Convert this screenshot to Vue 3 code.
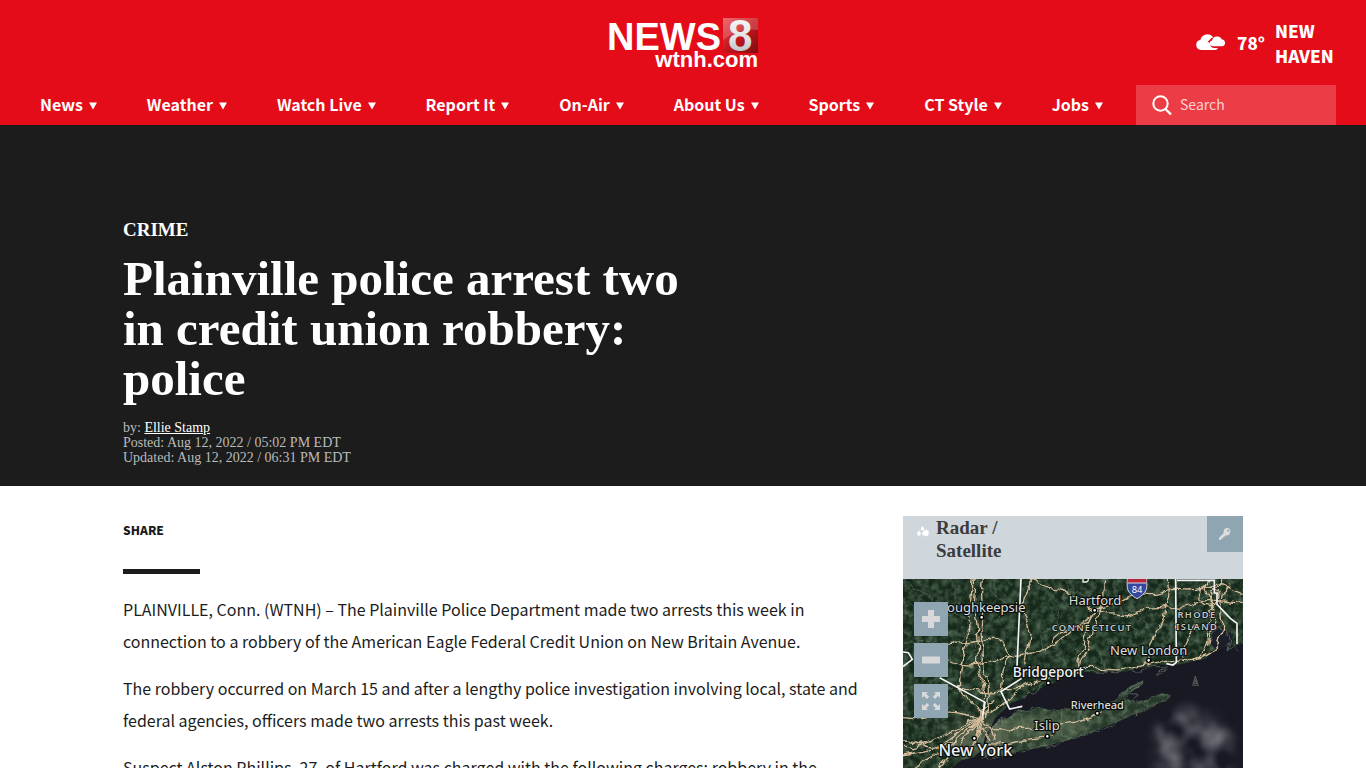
<template>
  <div class="page">
    <header class="site-header">
      <div class="header-top">
        <a href="#" class="logo" aria-label="News 8 wtnh.com">
          <svg width="152" height="56" viewBox="0 0 152 56">
            <defs>
              <linearGradient id="logoBox" x1="0" y1="0" x2="1" y2="1">
                <stop offset="0" stop-color="#e8484c" />
                <stop offset="0.5" stop-color="#c4161c" />
                <stop offset="1" stop-color="#7c0d12" />
              </linearGradient>
              <linearGradient id="logoEight" x1="0" y1="0" x2="0" y2="1">
                <stop offset="0" stop-color="#ffffff" />
                <stop offset="0.6" stop-color="#dcdfe1" />
                <stop offset="1" stop-color="#aab0b4" />
              </linearGradient>
            </defs>
            <rect x="116" y="3" width="35" height="35" fill="url(#logoBox)" />
            <path d="M116 3h35v12c-12-2-24 2-35 10z" fill="#fff" opacity="0.18" />
            <text x="0" y="35" class="logo-news">NEWS</text>
            <text x="121" y="36" class="logo-eight" fill="url(#logoEight)">8</text>
            <text x="151" y="52" text-anchor="end" class="logo-site">wtnh.com</text>
          </svg>
        </a>
        <a href="#" class="weather">
          <svg width="32" height="18" viewBox="0 0 32 18" fill="#fff">
            <path d="M6 16a5 5 0 0 1-.7-9.900A7.400 7.400 0 0 1 18.300 3.200a6 6 0 0 0-4.200 3.300 4.600 4.600 0 0 0-1.700 1.500 7 7 0 0 1 2.800 1c-.5 3 1.500 4.800 4 5H23A4 4 0 0 1 20 16z" />
            <path d="M17.300 12.300a3 3 0 0 1-.3-5.900A5.400 5.400 0 0 1 27 5.600a3.400 3.400 0 0 1 .4 6.700z" />
          </svg>
          <span class="temp">78°</span>
          <span class="city">NEW HAVEN</span>
        </a>
      </div>
      <div class="header-nav">
        <nav class="nav-list">
          <a v-for="item in navItems" :key="item" href="#" class="nav-item">
            {{ item }}
            <svg width="8" height="8" viewBox="0 0 8 8"><path d="M0 0.500h8L4 7.500z" fill="#fff" /></svg>
          </a>
        </nav>
        <form class="search" @submit.prevent>
          <label for="search-input" aria-label="Search">
            <svg width="20" height="21" viewBox="0 0 20 21" fill="none" stroke="#fff" stroke-width="2">
              <circle cx="8.500" cy="8.500" r="7.200" />
              <path d="M13.500 14l5.500 5.500" stroke-width="2.400" />
            </svg>
          </label>
          <input id="search-input" v-model="query" type="text" placeholder="Search" />
        </form>
      </div>
    </header>

    <section class="hero">
      <div class="container">
        <a href="#" class="category">CRIME</a>
        <h1 class="headline">Plainville police arrest two in credit union robbery: police</h1>
        <div class="meta">
          <p>by: <a href="#">Ellie Stamp</a></p>
          <p>Posted: Aug 12, 2022 / 05:02 PM EDT</p>
          <p>Updated: Aug 12, 2022 / 06:31 PM EDT</p>
        </div>
      </div>
    </section>

    <main class="container content">
      <article class="article">
        <h2 class="share">SHARE</h2>
        <div class="divider"></div>
        <p v-for="(text, i) in paragraphs" :key="i">{{ text }}</p>
      </article>

      <aside class="radar">
        <div class="radar-header">
          <svg class="radar-icon" width="13" height="11" viewBox="0 0 13 11" fill="#fff">
            <path d="M2 4.500c1 1.400 1.800 2.300 1.800 3.400a1.800 1.800 0 0 1-3.600 0C.2 6.800 1 5.900 2 4.500z" />
            <path d="M5.500 0c.9 1.300 1.600 2 1.600 3a1.600 1.600 0 0 1-3.200 0c0-1 .7-1.700 1.600-3z" />
            <path d="M9 2.500l.8 2 2-.6-.7 2 1.700 1.100-1.800 1 .3 2.200-1.900-.8L8 10.800 7 9.300l-2.100.3.900-1.800L4.600 6.500l1.900-.4.400-2 1.400.8z" />
          </svg>
          <h3>Radar / Satellite</h3>
          <button class="key-button" aria-label="Legend">
            <svg width="14" height="14" viewBox="0 0 14 14">
              <path d="M9.400 0.800a3.900 3.900 0 0 0-3.700 5.100L1 10.800v2.300h1.900l.5-1.400 1.400-.3.300-1.400 1.300-.3 1-1.300A3.900 3.900 0 1 0 9.400.8z" fill="#dcdcdc" />
              <circle cx="10.300" cy="3.700" r="1.100" fill="#8fa5b1" />
            </svg>
          </button>
        </div>
        <div class="map">
          <svg class="map-canvas" viewBox="24 207 1020 630" preserveAspectRatio="xMidYMin slice">
            <defs>
              <filter id="terrain" x="0" y="0" width="1" height="1">
                <feTurbulence type="fractalNoise" baseFrequency="0.05" numOctaves="4" seed="4" />
                <feColorMatrix values="0 0 0 0 0.22  0 0 0 0 0.34  0 0 0 0 0.22  1 0 0 0 -0.34" />
              </filter>
              <filter id="cloud" x="0" y="0" width="1" height="1">
                <feTurbulence type="fractalNoise" baseFrequency="0.014" numOctaves="2" seed="9" />
                <feColorMatrix values="0 0 0 0 0.44  0 0 0 0 0.44  0 0 0 0 0.48  1 0 0 0 -0.3" />
              </filter>
              <filter id="wobble" filterUnits="userSpaceOnUse" x="24" y="207" width="1020" height="630">
                <feTurbulence type="fractalNoise" baseFrequency="0.03" numOctaves="3" seed="2" />
                <feDisplacementMap in="SourceGraphic" scale="24" xChannelSelector="R" yChannelSelector="G" />
              </filter>
              <filter id="soft" x="-0.3" y="-0.3" width="1.6" height="1.6"><feGaussianBlur stdDeviation="18" /></filter>
              <clipPath id="landClip"><path :d="mainland" /><path :d="island" /></clipPath>
              <mask id="cloudMask">
                <path d="M780 837V640l70-50 100 20 60 70v157z" fill="#fff" filter="url(#soft)" />
              </mask>
            </defs>
            <rect x="24" y="207" width="1020" height="630" fill="#181923" />
            <path :d="mainland" fill="#15281a" />
            <path :d="island" fill="#27392a" />
            <g clip-path="url(#landClip)">
              <rect x="24" y="207" width="1020" height="630" filter="url(#terrain)" />
              <ellipse cx="250" cy="690" rx="90" ry="60" fill="#7b8369" opacity="0.5" filter="url(#soft)" />
              <ellipse cx="430" cy="650" rx="150" ry="30" fill="#738264" opacity="0.5" filter="url(#soft)" />
              <path d="M945 400l8-40 15-18 8 20 12-14 4 30 14-14 6 36-14 34-16-22-10 18z" fill="#1c1e29" />
            </g>
            <g filter="url(#wobble)">
              <path :d="island" fill="none" stroke="#758271" stroke-width="2" stroke-dasharray="9 3 4 2" />
              <path d="M300 640l18-12 10 12 14-20 18 12M385 565l15-18 16 5 20-22 24-8M570 482l38 8 25-6 30 5 40-10 35 5 24-16 50 3M945 390l18-45 16 25 10-15 15 35-8 30 20-15 14 14M680 557l20-22 28-12 15-10-8 14-30 20 22 14-8 8M780 488l25-12 5 5-27 12z" fill="none" stroke="#718071" stroke-width="2" />
              <g class="boundaries">
                <path v-for="(d, i) in boundaries" :key="i" :d="d" />
              </g>
            </g>
            <path d="M893 526l8-28 9 28zM898 521l4-12 3 12z" fill="none" stroke="#718071" stroke-width="2" />
            <rect x="740" y="540" width="304" height="297" filter="url(#cloud)" mask="url(#cloudMask)" />
            <g class="roads" filter="url(#wobble)">
              <path v-for="(d, i) in roads" :key="i" :d="d" />
            </g>
            <g class="borders">
              <path v-for="(d, i) in borders" :key="i" :d="d" />
            </g>
            <path d="M697 207h58c-1 10 2 17 0 26-2 14-14 24-29 33-15-9-27-19-29-33-2-9 1-16 0-26z" fill="#3547a0" stroke="#dcdce4" stroke-width="3" />
            <path d="M698 207h56v12h-56z" fill="#b82635" />
            <path d="M698 219h56" stroke="#dcdce4" stroke-width="3" />
            <path d="M564 207v9h10q7-2 6-9" fill="none" stroke="#eee" stroke-width="4" />
            <text x="726" y="249" text-anchor="middle" class="route">84</text>
            <g v-for="place in places" :key="place.name">
              <circle v-if="place.dot" :cx="place.dot[0]" :cy="place.dot[1]" r="6" fill="#fff" stroke="#000" stroke-width="4" />
              <text :x="place.x" :y="place.y" text-anchor="middle" :class="['place', place.kind]">{{ place.name }}</text>
            </g>
          </svg>
          <div class="map-controls">
            <button aria-label="Zoom in">
              <svg width="18" height="18" viewBox="0 0 18 18" fill="#d6d8d9"><path d="M6 0h6v6h6v6h-6v6H6v-6H0V6h6z" /></svg>
            </button>
            <button aria-label="Zoom out">
              <svg width="18" height="18" viewBox="0 0 18 18" fill="#d6d8d9"><path d="M0 5.500h18v7H0z" /></svg>
            </button>
            <button aria-label="Full screen">
              <svg width="18" height="18" viewBox="0 0 18 18" fill="#d6d8d9">
                <path d="M0 0h6L4.200 1.800l3 3L5 7 2 4 0 6zM18 0v6l-2-2-3 3-2.200-2.200 3-3L12 0zM0 18v-6l2 2 3-3 2.200 2.200-3 3L6 18zM18 18h-6l1.800-1.800-3-3L13 11l3 3 2-2z" />
              </svg>
            </button>
          </div>
        </div>
      </aside>
    </main>
  </div>
</template>

<script setup>
import { ref } from 'vue';

const query = ref('');

const navItems = ['News', 'Weather', 'Watch Live', 'Report It', 'On-Air', 'About Us', 'Sports', 'CT Style', 'Jobs'];

const paragraphs = [
  'PLAINVILLE, Conn. (WTNH) – The Plainville Police Department made two arrests this week in connection to a robbery of the American Eagle Federal Credit Union on New Britain Avenue.',
  'The robbery occurred on March 15 and after a lengthy police investigation involving local, state and federal agencies, officers made two arrests this past week.',
  'Suspect Alston Phillips, 27, of Hartford was charged with the following charges: robbery in the'
];

// Land outlines
const mainland = 'M24 207H1044V400L1020 408 1000 402 975 418 945 425 935 445 900 452 860 462 825 466 790 462 755 472 720 476 690 486 650 484 600 490 570 482 540 494 505 500 480 518 455 524 430 540 405 548 385 565 350 580 325 600 300 625 288 650 270 680 262 720 235 742 200 750 170 774 150 837H24z';
const island = 'M275 690L292 650 310 632 345 622 370 598 400 604 430 590 470 602 520 596 570 602 625 580 660 572 680 548 715 525 742 512 735 528 705 548 690 565 720 578 760 568 800 550 828 555 822 566 760 594 700 622 640 648 570 674 500 696 430 714 360 726 300 742 255 738z';

const roads = [
  'M240 207c6 40-8 70 2 110s4 60 8 90-12 60 4 90 16 50 14 80-18 40-22 80-10 30-8 50',
  'M262 207c-8 60 6 90-2 130s10 90 4 120 18 50 16 80 4 40-6 90',
  'M235 207c-10 70-13 100-18 160s-14 80-20 120-8 60 20 80 30 20 60 50',
  'M24 620c60 8 90-4 130-10s60 15 110 12M24 712c50 8 70-20 110-30s70-50 120-56',
  'M24 735c40-10 90-10 130-40s50-50 105-70M130 774c30-40 60-60 80-90s30-40 50-60',
  'M60 774c50-30 90-50 130-90s40-40 70-60M24 690c60 0 60 30 110 20s90-60 130-90',
  'M160 400c50-2 90 0 130-18 40-8 35 60 70 57s70-18 100-28 60-40 70-52 50-30 65-52',
  'M190 540c30-8 60 10 110 5s60-20 90-10M160 450c40 20 70 15 110 10s50-20 80-22',
  'M270 620c30-20 60-40 90-70s50-30 80-38 60-30 110-38 90 10 130 5 70-15 110-22 80-5 120-15 60-30 70-70-8-70 0-110 25-20 30-42',
  'M240 660c60-10 100 0 150-2s100-18 140-20 60-18 90-30M270 700c80 10 130-20 200-20',
  'M282 690c-10-20-20-40-22-60s-10 60-30 80M210 740c20-30 50-60 52-110s20-30 35-60M240 620c30 20 50 20 60 70',
  'M420 207c-20 20-40 60-35 90s20 50 20 80-20 60-18 90M345 440c-30 30-20 60-26 110',
  'M420 207c40 40 70 20 95 40s50 30 85 53c30 20 50 6 80 15s40-12 80-20 90 10 130-10 80-15 154-5',
  'M630 207c-10 40 10 60-28 95s-20 80-40 115-10 50-18 65M615 290c0 30-20 60-22 80s-20 60-30 75-14 25-14 40',
  'M600 300c20-10 40-10 70-22s50-30 90-25 60-20 90-15 70 0 110-14 50 30 80 25',
  'M820 207c10 60-10 70-10 105s-40 60-45 90 4 30-4 52M860 440c10-40 30-50 35-100M940 207c-30 40 20 60 10 90s-10 40-14 90-30 60-80 65',
  'M985 207c-20 30-50 40-42 70s20 15 20 40-25 50-25 90M920 240c20-20 40-10 50 10s-20 50-45 30-10-30-5-40',
  'M470 400c0-25 20-30 40-35s40-25 70-30'
];

const boundaries = [
  'M24 217l90 50v60h40M24 400h45v-8h60M24 560l70-30 24 20 60-20M180 240v70l50 30-30 50M300 207v50l30 20-15 60M510 207l10 40-30 45v50l-50 30 8 50M520 247l70 10M660 207v40l20 60 40-8 40 60M700 320l30 60M600 420l25 20 5 40 30 5M780 340l60 5M870 260h80M640 380v30l60 10M900 300v60M215 460l30-60-40-20M430 480v40l30 10M510 500v-50l-40-30M380 620v50l20 45M500 610v60l30 20M560 600l-8 50 20 20'
];

const borders = [
  'M378 207L366 468M380 505l-62 40 26 52 38-8M24 470l28-22-12-20-16-2',
  'M134 503l136 74-8 45M842 207l2 250-10 8-20-4M846 211h112v38h8v34l40 42 20 15v62'
];

const places = [
  { name: 'Poughkeepsie', x: 262, y: 305, dot: [260, 322] },
  { name: 'Hartford', x: 600, y: 285, dot: [599, 301] },
  { name: 'CONNECTICUT', x: 591, y: 364, kind: 'state' },
  { name: 'RHODE', x: 906, y: 325, kind: 'state' },
  { name: 'ISLAND', x: 906, y: 361, kind: 'state' },
  { name: 'New London', x: 761, y: 434, dot: [761, 451] },
  { name: 'Bridgeport', x: 460, y: 501, dot: [460, 519], kind: 'medium' },
  { name: 'Riverhead', x: 607, y: 598, dot: [607, 610], kind: 'small' },
  { name: 'Islip', x: 456, y: 661, dot: [457, 679] },
  { name: 'New York', x: 241, y: 738, dot: [238, 685], kind: 'large' }
];
</script>

<style>
body {
  margin: 0;
  background: #fff;
}
</style>

<style scoped>
.page {
  height: 100vh;
  overflow: hidden;
  font-family: "Noto Sans CJK SC", "Open Sans", sans-serif;
  color: #1c1c1c;
}

.site-header {
  background: #e50c19;
}

.header-top {
  display: grid;
  grid-template-columns: 1fr auto 1fr;
  align-items: center;
  height: 85px;
  padding: 0 30px;
}

.logo {
  grid-column: 2;
  line-height: 0;
}

.logo svg {
  overflow: visible;
}

.logo text {
  font-family: "Liberation Sans", Arial, sans-serif;
  font-weight: bold;
  line-height: 1;
}

.logo-news {
  font-size: 38px;
  fill: #fff;
}

.logo-eight {
  font-size: 44px;
}

.logo-site {
  font-size: 22px;
  fill: #fff;
}

.weather {
  justify-self: end;
  display: flex;
  align-items: center;
  gap: 10px;
  color: #fff;
  font-size: 17px;
  font-weight: 900;
  line-height: 25px;
  text-decoration: none;
}

.city {
  width: 61px;
}

.header-nav {
  display: flex;
  height: 40px;
  padding-right: 30px;
}

.nav-list {
  flex: 1;
  display: flex;
  justify-content: space-between;
  align-items: center;
  padding: 0 33px 2px 40px;
}

.nav-item {
  display: flex;
  align-items: center;
  gap: 6px;
  color: #fff;
  font-size: 16px;
  font-weight: bold;
  line-height: 24px;
  text-decoration: none;
  white-space: nowrap;
}

.nav-item svg {
  margin-top: 4px;
}

.search {
  display: flex;
  align-items: center;
  gap: 8px;
  width: 200px;
  box-sizing: border-box;
  padding-left: 16px;
  background: #ec3d47;
}

.search label {
  line-height: 0;
}

.search input {
  flex: 1;
  min-width: 0;
  padding: 0 0 2px;
  border: none;
  outline: none;
  background: transparent;
  color: #fff;
  font-family: inherit;
  font-size: 14px;
}

.search input::placeholder {
  color: #fbd0d3;
}

.container {
  max-width: 1120px;
  margin: 0 auto;
}

.hero {
  padding: 93px 0 21px;
  background: #1c1c1c;
  color: #fff;
  font-family: "Liberation Serif", "Times New Roman", serif;
}

.category {
  display: block;
  color: #fff;
  font-size: 19px;
  font-weight: bold;
  line-height: 24px;
  text-decoration: none;
}

.headline {
  max-width: 570px;
  margin: 12px 0 16px;
  font-size: 49px;
  font-weight: bold;
  line-height: 50px;
}

.meta {
  color: #bbb;
  font-size: 14px;
  line-height: 15px;
}

.meta p {
  margin: 0;
}

.meta a {
  color: #fff;
}

.content {
  display: flex;
  gap: 40px;
  padding-top: 30px;
}

.article {
  flex: 1;
  min-width: 0;
}

.share {
  margin: 0;
  font-size: 12px;
  font-weight: 900;
  line-height: 28px;
}

.divider {
  width: 77px;
  height: 5px;
  margin: 25px 0 19px;
  background: #1c1c1c;
}

.article p {
  margin: 0 0 15px;
  font-size: 16px;
  line-height: 32px;
}

.radar {
  width: 340px;
}

.radar-header {
  display: flex;
  align-items: flex-start;
  height: 63px;
  background: #cfd7dd;
}

.radar-icon {
  margin: 10px 6px 0 14px;
}

.radar-header h3 {
  width: 110px;
  margin: 0;
  color: #3c3c3c;
  font-family: "Liberation Serif", "Times New Roman", serif;
  font-size: 19px;
  font-weight: bold;
  line-height: 23px;
}

.key-button {
  display: flex;
  align-items: center;
  justify-content: center;
  width: 36px;
  height: 36px;
  margin-left: auto;
  padding: 0;
  border: none;
  background: #8fa5b1;
}

.map {
  position: relative;
  overflow: hidden;
  background: #181923;
}

.map-canvas {
  display: block;
  width: 100%;
}

.map-controls {
  position: absolute;
  top: 23px;
  left: 11px;
  display: grid;
  gap: 7px;
}

.map-controls button {
  display: flex;
  align-items: center;
  justify-content: center;
  width: 34px;
  height: 34px;
  padding: 0;
  border: none;
  background: #8fa5b1;
}

.roads path {
  fill: none;
  stroke: #d6bc9b;
  stroke-width: 4px;
}

.boundaries path {
  fill: none;
  stroke: #75897c;
  stroke-width: 2px;
  opacity: 0.7;
}

.borders path {
  fill: none;
  stroke: #f4f4f4;
  stroke-width: 5px;
}

.route {
  fill: #fff;
  font-family: "Noto Sans", sans-serif;
  font-size: 28px;
}

.place {
  fill: #ddd;
  stroke: #0b0f0d;
  stroke-width: 8px;
  stroke-linejoin: round;
  paint-order: stroke;
  font-family: "Noto Sans", sans-serif;
  font-size: 39px;
}

.place.state {
  fill: #c4c8c4;
  stroke-width: 5px;
  font-size: 28px;
  font-weight: 600;
  letter-spacing: 4px;
}

.place.medium {
  fill: #f2f2f2;
  font-size: 41px;
  font-weight: 500;
}

.place.small {
  font-size: 33px;
  font-weight: 500;
}

.place.large {
  fill: #f4f4f4;
  font-size: 49px;
  font-weight: 500;
}
</style>
